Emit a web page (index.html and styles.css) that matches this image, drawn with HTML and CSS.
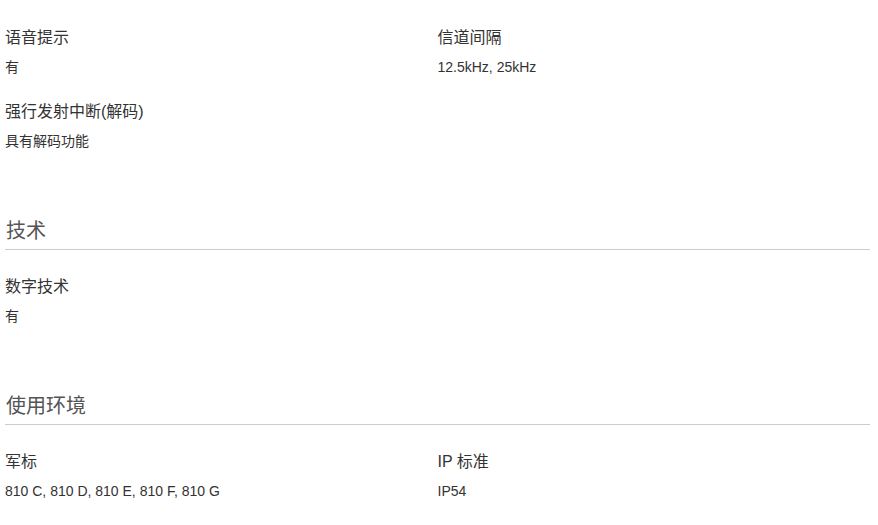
FILE: index.html
```html
<!DOCTYPE html>
<html lang="zh">
<head>
<meta charset="utf-8">
<link rel="stylesheet" href="styles.css">
</head>
<body>
<div class="page">
  <div class="grid">
    <div class="item"><div class="label">语音提示</div><div class="value">有</div></div>
    <div class="item"><div class="label">信道间隔</div><div class="value">12.5kHz, 25kHz</div></div>
    <div class="item"><div class="label">强行发射中断(解码)</div><div class="value">具有解码功能</div></div>
  </div>
  <h2 class="heading">技术</h2>
  <div class="grid">
    <div class="item"><div class="label">数字技术</div><div class="value">有</div></div>
  </div>
  <h2 class="heading">使用环境</h2>
  <div class="grid">
    <div class="item"><div class="label">军标</div><div class="value">810 C, 810 D, 810 E, 810 F, 810 G</div></div>
    <div class="item"><div class="label">IP 标准</div><div class="value">IP54</div></div>
  </div>
</div>
</body>
</html>
```
FILE: styles.css
```css
html, body {
  margin: 0;
  padding: 0;
  background: #fff;
}
body {
  font-family: "Liberation Sans", Arial, "Noto Sans CJK SC", sans-serif;
  color: #333;
}
.page {
  width: 865px;
  padding: 26px 0 0 5px;
}
.grid {
  display: grid;
  grid-template-columns: 1fr 1fr;
  row-gap: 23px;
}
.label {
  font-size: 16px;
  line-height: 24px;
  color: #333;
}
.value {
  margin-top: 7px;
  font-size: 14px;
  line-height: 20px;
  color: #333;
}
.heading {
  margin: 66px 0 25px;
  padding: 0 0 4px 1px;
  font-size: 20px;
  line-height: 28px;
  font-weight: normal;
  color: #555;
  border-bottom: 1px solid #ccc;
}
```
